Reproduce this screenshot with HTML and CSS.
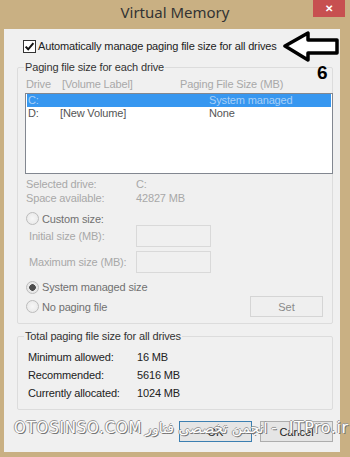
FILE: index.html
```html
<!DOCTYPE html>
<html>
  <head>
    <meta charset="UTF-8" />
    <title>Virtual Memory</title>
    <link rel="stylesheet" href="styles.css">
  </head>

  <body>
    <div class="titlebar">
      <span></span>
      <h1>Virtual Memory</h1>
      <button class="close-btn" type="button">&#x2715;</button>
    </div>

    <div class="window">
      <label class="auto-row">
        <svg class="checkbox" width="13" height="13" viewBox="0 0 13 13">
          <rect x="0.5" y="0.5" width="12" height="12" fill="#fff" stroke="#333" />
          <path d="M2.6 6.6 L5.2 9.3 L10.4 3.2" fill="none" stroke="#111" stroke-width="2" />
        </svg>
        Automatically manage paging file size for all drives
      </label>

      <fieldset class="group drives">
        <legend>Paging file size for each drive</legend>
        <div class="list-head">
          <span class="head-drive">Drive</span>
          <span class="head-label">[Volume Label]</span>
          <span>Paging File Size (MB)</span>
        </div>
        <div class="drive-list">
          <div class="drive-row selected">
            <span class="row-drive">C:</span>
            <span class="row-label"></span>
            <span>System managed</span>
          </div>
          <div class="drive-row">
            <span class="row-drive">D:</span>
            <span class="row-label">[New Volume]</span>
            <span>None</span>
          </div>
        </div>

        <div class="info">
          <span>Selected drive:</span><span>C:</span>
          <span>Space available:</span><span>42827 MB</span>
        </div>

        <div class="radio-row custom">
          <span class="radio"></span>
          Custom size:
        </div>
        <div class="size-row">
          <span>Initial size (MB):</span>
          <input class="size-input" type="text" disabled />
        </div>
        <div class="size-row second">
          <span>Maximum size (MB):</span>
          <input class="size-input" type="text" disabled />
        </div>

        <div class="radio-row system">
          <span class="radio checked"></span>
          System managed size
        </div>
        <div class="radio-row last">
          <span class="radio"></span>
          No paging file
          <button class="set-btn" type="button" disabled>Set</button>
        </div>
      </fieldset>

      <fieldset class="group totals">
        <legend>Total paging file size for all drives</legend>
        <div class="total-rows">
          <span>Minimum allowed:</span><span>16 MB</span>
          <span>Recommended:</span><span>5616 MB</span>
          <span>Currently allocated:</span><span>1024 MB</span>
        </div>
      </fieldset>

      <div class="buttons">
        <button class="btn default" type="button">OK</button>
        <button class="btn" type="button">Cancel</button>
      </div>
    </div>

    <!-- annotation over the dialog -->
    <svg class="arrow" width="60" height="32" viewBox="0 0 60 32">
      <path d="M3 15 L26 2 L26 9 L55 9 L55 22 L26 22 L26 29 Z" fill="#fff" stroke="#000" stroke-width="3.5" stroke-linejoin="round" />
    </svg>
    <span class="step">6</span>

    <div class="watermark">
      <span class="wm-site">OTOSINSO.COM</span>
      <span class="wm-fa" dir="rtl">انجمن تخصصی فناور</span>
      <span class="wm-dash">-</span>
      <span class="wm-name">ITPro.ir</span>
    </div>
  </body>
</html>
```

FILE: styles.css
```css
* {
  box-sizing: border-box;
}

body {
  margin: 0;
  width: 350px;
  height: 457px;
  overflow: hidden;
  background-color: #c9b083;
  font-family: "Liberation Sans", Arial, sans-serif;
  font-size: 11px;
  letter-spacing: -0.15px;
  color: #222;
}

.titlebar {
  height: 29px;
  display: grid;
  grid-template-columns: 1fr auto 1fr;
}

.titlebar h1 {
  margin: 0;
  font-family: "Noto Sans", sans-serif;
  font-size: 15px;
  font-weight: normal;
  letter-spacing: 0;
  line-height: 25px;
  color: #333;
}

.close-btn {
  justify-self: end;
  width: 32px;
  height: 17px;
  margin-right: 5px;
  padding: 0;
  border: none;
  background-color: #c75050;
  color: #fff;
  font-size: 10px;
  font-weight: bold;
  line-height: 17px;
}

.window {
  margin: 0 10px 0 4px;
  height: 423px;
  padding-top: 11px;
  background-color: #f0f0f0;
}

.auto-row {
  display: flex;
  align-items: center;
  gap: 2px;
  height: 13px;
  margin-left: 19px;
  line-height: 13px;
}

.group {
  margin: 7px 7px 0 13px;
  padding: 0 0 6px 6px;
  min-width: 0;
  border: 1px solid #dcdcdc;
  border-radius: 2px;
}

.group legend {
  padding: 0 1px;
  line-height: 14px;
  color: #333;
}

.list-head {
  display: flex;
  height: 14px;
  margin-top: 3px;
  padding-left: 2px;
  line-height: 14px;
  color: #a8a8a8;
}

.head-drive {
  width: 36px;
}

.head-label {
  width: 118px;
}

.drive-list {
  width: 308px;
  height: 81px;
  margin: 2px 0 0 1px;
  padding: 0 1px;
  border: 1px solid #828790;
  background-color: #fff;
}

.drive-row {
  display: flex;
  height: 13px;
  padding-left: 1px;
  line-height: 13px;
  color: #555;
}

.drive-row.selected {
  background-color: #3797f0;
  color: #a9d0f7;
}

.row-drive {
  width: 32px;
}

.row-label {
  width: 149px;
}

.info {
  display: grid;
  grid-template-columns: 110px auto;
  margin-top: 3px;
  padding-left: 2px;
  line-height: 14px;
  color: #a8a8a8;
}

.radio-row {
  display: flex;
  align-items: center;
  gap: 3px;
  height: 14px;
  padding-left: 2px;
  color: #707070;
}

.radio-row.custom {
  height: 13px;
  margin-top: 7px;
}

.radio-row.system {
  margin-top: 7px;
}

.radio-row.last {
  height: 21px;
  margin-top: 2px;
}

.radio {
  width: 13px;
  height: 13px;
  border: 1px solid #bcbcbc;
  border-radius: 50%;
  background: radial-gradient(circle, #f7f7f7, #e6e6e6);
}

.radio.checked {
  background: radial-gradient(circle, #4d4d4d 0 3px, #e8e8e8 3.6px);
}

.size-row {
  display: grid;
  grid-template-columns: 107px 75px;
  align-items: center;
  height: 22px;
  padding-left: 5px;
  color: #a8a8a8;
}

.size-row.second {
  margin-top: 4px;
}

.size-input {
  width: 75px;
  height: 22px;
  border: 1px solid #d9d9d9;
  background-color: #f0f0f0;
}

.set-btn {
  width: 73px;
  height: 21px;
  margin: 0 9px 0 auto;
  border: 1px solid #d5d5d5;
  background-color: #efefef;
  color: #8a8a8a;
  font-family: inherit;
  font-size: 11px;
}

.totals {
  margin-top: 5px;
  padding-bottom: 7px;
}

.total-rows {
  display: grid;
  grid-template-columns: 109px auto;
  padding: 5px 0 0 4px;
  line-height: 18px;
  color: #222;
}

.buttons {
  display: flex;
  justify-content: flex-end;
  gap: 8px;
  margin: 11px 7px 0 0;
}

.btn {
  width: 73px;
  height: 21px;
  padding: 0;
  border: 1px solid #adadad;
  background-color: #e5e5e5;
  color: #222;
  font-family: inherit;
  font-size: 11px;
}

.btn.default {
  border-color: #3c7fb1;
}

.arrow {
  position: absolute;
  left: 282px;
  top: 31px;
}

.step {
  position: absolute;
  left: 317px;
  top: 62px;
  font-size: 19px;
  font-weight: bold;
  color: #000;
}

.watermark {
  position: absolute;
  left: 14px;
  top: 418px;
  display: flex;
  align-items: center;
  white-space: nowrap;
  font-family: "DejaVu Sans", sans-serif;
  letter-spacing: 0;
  color: #fff;
  text-shadow: 1px 1px 0 #777, -1px 0 0 #999, 0 -1px 0 #999;
}

.wm-site {
  font-size: 15px;
  letter-spacing: 0.8px;
}

.wm-fa {
  margin-left: 3px;
  font-size: 14px;
}

.wm-dash {
  margin-left: 4px;
  font-size: 15px;
}

.wm-name {
  margin-left: 12px;
  font-size: 16px;
  letter-spacing: 0.5px;
}
```
